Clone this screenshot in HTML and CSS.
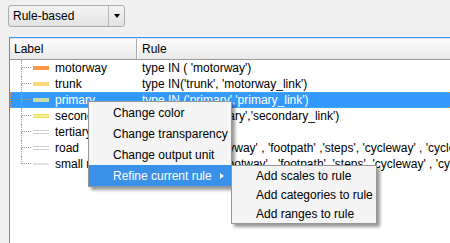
FILE: index.html
```html
<!DOCTYPE html>
<html>
<head>
  <title>Rule-based renderer</title>
  <link rel="stylesheet" href="styles.css">
</head>
<body>
  <div class="page">
    <div class="combo">
      <span class="combo-text">Rule-based</span>
      <span class="combo-btn"><span class="down-arrow"></span></span>
    </div>

    <div class="tree">
      <div class="tree-header">
        <div class="col-label">Label</div>
        <div class="col-rule">Rule</div>
      </div>

      <div class="row">
        <div class="col-label">
          <span class="branch"><span class="branch-top"></span><span class="branch-bottom"></span></span>
          <span class="symbol sym-motorway"></span>
          <span class="label">motorway</span>
        </div>
        <div class="col-rule">type IN ( 'motorway')</div>
      </div>

      <div class="row">
        <div class="col-label">
          <span class="branch"><span class="branch-top"></span><span class="branch-bottom"></span></span>
          <span class="symbol sym-trunk"></span>
          <span class="label">trunk</span>
        </div>
        <div class="col-rule">type IN('trunk', 'motorway_link')</div>
      </div>

      <div class="row selected">
        <div class="col-label">
          <span class="branch"><span class="branch-top"></span><span class="branch-bottom"></span></span>
          <span class="symbol sym-primary"></span>
          <span class="label">primary</span>
        </div>
        <div class="col-rule">type IN ('primary','primary_link')</div>
      </div>

      <div class="row">
        <div class="col-label">
          <span class="branch"><span class="branch-top"></span><span class="branch-bottom"></span></span>
          <span class="symbol sym-secondary"></span>
          <span class="label">secondary</span>
        </div>
        <div class="col-rule">type IN ('secondary','secondary_link')</div>
      </div>

      <div class="row">
        <div class="col-label">
          <span class="branch"><span class="branch-top"></span><span class="branch-bottom"></span></span>
          <span class="symbol sym-casing"></span>
          <span class="label">tertiary</span>
        </div>
        <div class="col-rule">type IN('tertiary')</div>
      </div>

      <div class="row">
        <div class="col-label">
          <span class="branch"><span class="branch-top"></span><span class="branch-bottom"></span></span>
          <span class="symbol sym-casing"></span>
          <span class="label">road</span>
        </div>
        <div class="col-rule">type IN ('road','byway' , 'footpath' ,'steps', 'cycleway' , 'cycleway')</div>
      </div>

      <div class="row">
        <div class="col-label">
          <span class="branch last"><span class="branch-top"></span><span class="branch-bottom"></span></span>
          <span class="symbol sym-small"></span>
          <span class="label">small road</span>
        </div>
        <div class="col-rule">type IN ('path', 'footway' , 'footpath' ,'steps', 'cycleway' , 'cycleway')</div>
      </div>
    </div>
  </div>

  <!-- context menu + submenu lie over the tree -->
  <div class="menu context-menu">
    <div class="menu-item">Change color</div>
    <div class="menu-item">Change transparency</div>
    <div class="menu-item">Change output unit</div>
    <div class="menu-item active">Refine current rule<span class="sub-arrow"></span></div>
  </div>

  <div class="menu sub-menu">
    <div class="menu-item">Add scales to rule</div>
    <div class="menu-item">Add categories to rule</div>
    <div class="menu-item">Add ranges to rule</div>
  </div>
</body>
</html>
```

FILE: styles.css
```css
body {
  margin: 0;
  width: 450px;
  height: 243px;
  overflow: hidden;
  background-color: #f0f0f0;
  font-family: "Liberation Sans", Arial, sans-serif;
  font-size: 12px;
  color: #000;
}

.page {
  padding: 5px 0 0 8px;
}

/* combo box */
.combo {
  display: flex;
  width: 117px;
  height: 22px;
  box-sizing: border-box;
  border: 1px solid #acacac;
  border-radius: 3px;
  background: linear-gradient(#f3f3f3, #e3e3e3);
}

.combo-text {
  flex-grow: 1;
  padding-left: 4px;
  line-height: 20px;
}

.combo-btn {
  width: 15px;
  border-left: 1px solid #b8b8b8;
  display: flex;
  align-items: center;
  justify-content: center;
}

.down-arrow {
  width: 0;
  height: 0;
  border-left: 3.5px solid transparent;
  border-right: 3.5px solid transparent;
  border-top: 4px solid #000;
}

/* tree view */
.tree {
  margin-top: 10px;
  margin-left: 1px;
  width: 460px;
  height: 230px;
  background-color: #fff;
  border-top: 1px solid #3399ff;
  border-left: 1px solid #3399ff;
}

.tree-header {
  display: flex;
  height: 22px;
  box-sizing: border-box;
  border-top: 1px solid #e4e4e4;
  border-bottom: 1px solid #9a9a9a;
  background: linear-gradient(#fcfcfc, #e9e9e9);
  line-height: 20px;
}

.tree-header .col-label {
  width: 127px;
  padding-left: 4px;
  box-sizing: border-box;
  border-right: 1px solid #a8a8a8;
  box-shadow: 1px 0 0 #fff;
}

.tree-header .col-rule {
  padding-left: 5px;
}

.row {
  display: flex;
  height: 16px;
  line-height: 16px;
  white-space: nowrap;
}

.row .col-label {
  display: flex;
  align-items: center;
  width: 128px;
  flex-shrink: 0;
}

.row .col-rule {
  padding-left: 4px;
}

.row.selected {
  background-color: #3399ff;
  color: #fff;
  outline: 1px dotted #f08a30;
  outline-offset: -1px;
}

.branch {
  display: flex;
  flex-direction: column;
  width: 10px;
  height: 16px;
  margin-left: 11px;
  margin-right: 2px;
  box-sizing: border-box;
}

.branch-top {
  height: 7px;
  border-left: 1px dotted #a0a0a0;
  border-bottom: 1px dotted #a0a0a0;
}

.branch-bottom {
  height: 8px;
  border-left: 1px dotted #a0a0a0;
}

.branch.last .branch-bottom {
  border-left: none;
}

.symbol {
  width: 16px;
  height: 4px;
  margin-right: 6px;
  box-sizing: border-box;
}

.sym-motorway { background-color: #f8984a; }
.sym-trunk { background-color: #fdd67a; }
.sym-primary { background-color: #c8dfa6; }

.sym-secondary {
  background-color: #f6ee9a;
  border-top: 1px solid #ebdd55;
  border-bottom: 1px solid #ebdd55;
}

.sym-casing {
  background-color: #fff;
  border-top: 1px solid #cdcdcd;
  border-bottom: 1px solid #cdcdcd;
}

.sym-small {
  height: 2px;
  background-color: #e2e2e2;
}

/* popup menus */
.menu {
  position: absolute;
  background-color: #f4f4f4;
  border: 1px solid #979797;
  box-shadow: 3px 3px 3px rgba(0, 0, 0, 0.4);
}

.context-menu {
  left: 88px;
  top: 101px;
  width: 142px;
}

.sub-menu {
  left: 231px;
  top: 165px;
  width: 144px;
}

.menu-item {
  display: flex;
  align-items: center;
  height: 21px;
  padding-left: 24px;
}

.sub-menu .menu-item {
  height: 19px;
}

.menu-item.active {
  background-color: #3991ea;
  color: #fff;
}

.sub-arrow {
  margin-left: 8px;
  width: 0;
  height: 0;
  border-top: 3.5px solid transparent;
  border-bottom: 3.5px solid transparent;
  border-left: 4px solid #fff;
}
```
